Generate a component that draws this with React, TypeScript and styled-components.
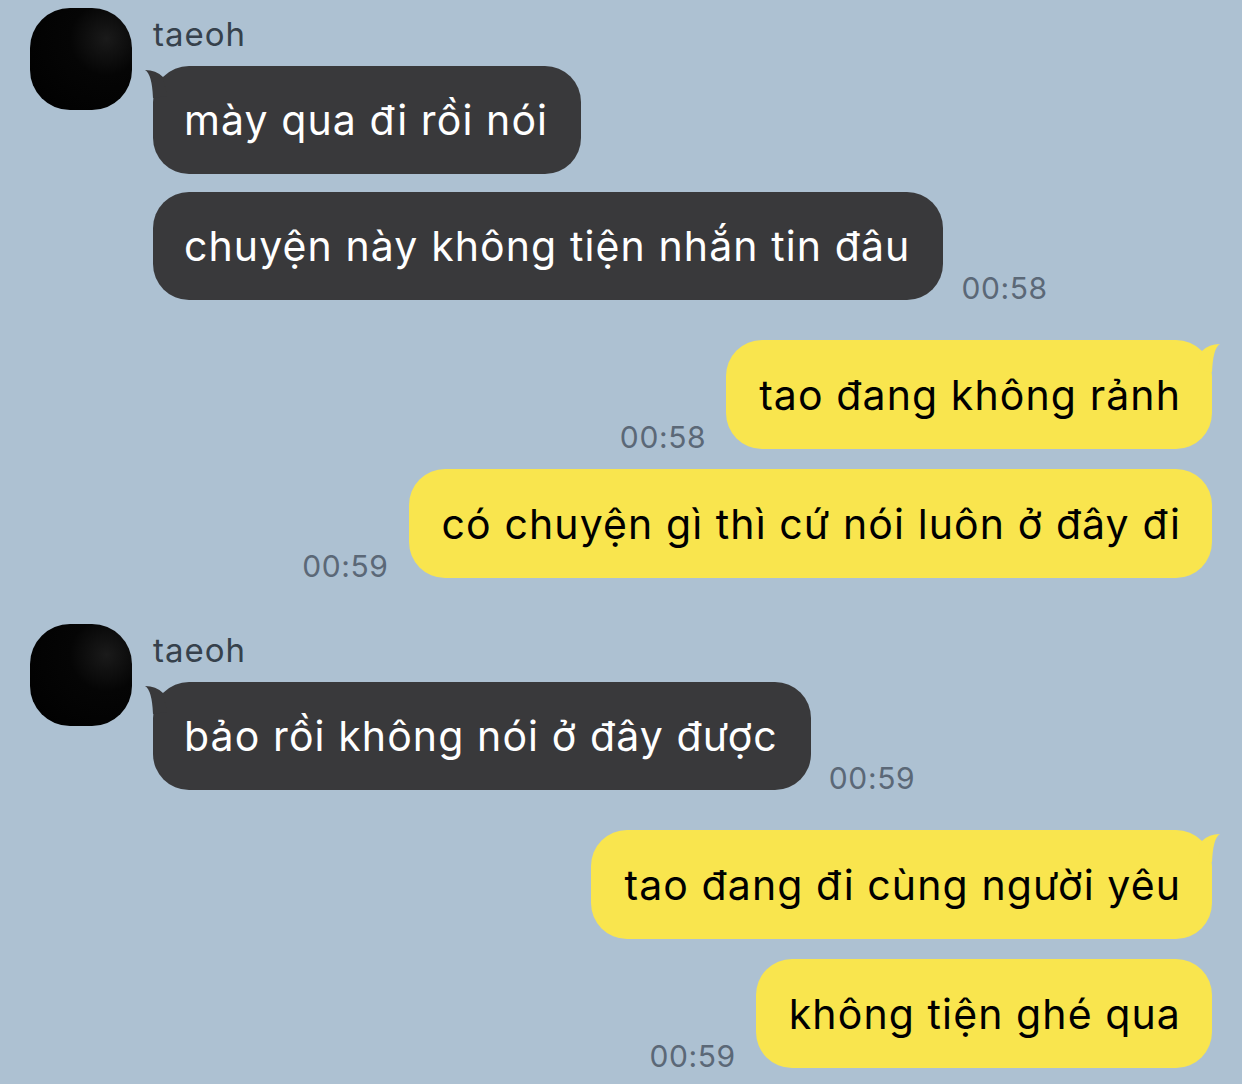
import React from "react";
import styled, { createGlobalStyle } from "styled-components";

const GlobalStyle = createGlobalStyle`
  html, body {
    margin: 0;
    padding: 0;
    background: #adc1d2;
  }
  body {
    font-family: Inter, "Noto Sans", "Liberation Sans", sans-serif;
  }
`;

type Msg = { text: string; time?: string };

const incomingA: Msg[] = [
  { text: "mày qua đi rồi nói" },
  { text: "chuyện này không tiện nhắn tin đâu", time: "00:58" },
];
const outgoingA: Msg[] = [
  { text: "tao đang không rảnh", time: "00:58" },
  { text: "có chuyện gì thì cứ nói luôn ở đây đi", time: "00:59" },
];
const incomingB: Msg[] = [{ text: "bảo rồi không nói ở đây được", time: "00:59" }];
const outgoingB: Msg[] = [
  { text: "tao đang đi cùng người yêu" },
  { text: "không tiện ghé qua", time: "00:59" },
];

const Page = styled.div`
  width: 1242px;
  height: 1084px;
  box-sizing: border-box;
  padding: 8px 30px 0 30px;
  overflow: hidden;
  display: flex;
  flex-direction: column;
`;

const Incoming = styled.div<{ $after: number }>`
  display: flex;
  gap: 21px;
  margin-bottom: ${(p) => p.$after}px;
`;

const Avatar = styled.div`
  flex: none;
  width: 102px;
  height: 102px;
  border-radius: 40px;
  background: radial-gradient(circle at 75% 30%, #1a1a1a 0%, #050505 35%, #000 100%);
`;

const Column = styled.div`
  display: flex;
  flex-direction: column;
  gap: 18px;
`;

const Name = styled.div`
  font-size: 33px;
  line-height: 36px;
  letter-spacing: 1px;
  color: #36414c;
  margin-top: 8px;
  margin-bottom: -4px;
`;

const Row = styled.div<{ $out?: boolean }>`
  display: flex;
  align-items: flex-end;
  justify-content: ${(p) => (p.$out ? "flex-end" : "flex-start")};
  gap: ${(p) => (p.$out ? 20 : 18)}px;
`;

const Outgoing = styled.div<{ $after: number }>`
  display: flex;
  flex-direction: column;
  gap: 20px;
  margin-bottom: ${(p) => p.$after}px;
`;

const Bubble = styled.div<{ $out?: boolean }>`
  position: relative;
  padding: ${(p) => (p.$out ? "32px 31px 31px 33px" : "31px 33px 31px 31px")};
  border-radius: 36px;
  font-size: 41px;
  line-height: 46px;
  letter-spacing: 1.1px;
  white-space: nowrap;
  background: ${(p) => (p.$out ? "#f9e54e" : "#39393b")};
  color: ${(p) => (p.$out ? "#000" : "#fff")};
`;

const Time = styled.div`
  font-size: 30px;
  line-height: 32px;
  letter-spacing: 0.6px;
  color: #5b6877;
  margin-bottom: -4px;
  white-space: nowrap;
`;

const Tail = styled.svg<{ $out?: boolean }>`
  position: absolute;
  top: 0;
  width: 30px;
  height: 36px;
  overflow: visible;
  ${(p) => (p.$out ? "right: 0;" : "left: 0;")}
`;

const TailIn = () => (
  <Tail viewBox="0 0 30 36">
    <path d="M -8 4 Q 3 4 10 11 L 14 30 L 0 32 Q -1 8 -8 4 Z" fill="#39393b" />
  </Tail>
);

const TailOut = () => (
  <Tail $out viewBox="0 0 30 36">
    <path d="M 38 4 Q 27 4 20 11 L 16 30 L 30 32 Q 31 8 38 4 Z" fill="#f9e54e" />
  </Tail>
);

const InGroup = ({ msgs, after }: { msgs: Msg[]; after: number }) => (
  <Incoming $after={after}>
    <Avatar />
    <Column>
      <Name>taeoh</Name>
      {msgs.map((m, i) => (
        <Row key={i}>
          <Bubble>
            {i === 0 && <TailIn />}
            {m.text}
          </Bubble>
          {m.time && <Time>{m.time}</Time>}
        </Row>
      ))}
    </Column>
  </Incoming>
);

const OutGroup = ({ msgs, after }: { msgs: Msg[]; after: number }) => (
  <Outgoing $after={after}>
    {msgs.map((m, i) => (
      <Row $out key={i}>
        {m.time && <Time>{m.time}</Time>}
        <Bubble $out>
          {i === 0 && <TailOut />}
          {m.text}
        </Bubble>
      </Row>
    ))}
  </Outgoing>
);

export default function App() {
  return (
    <>
      <GlobalStyle />
      <Page>
        <InGroup msgs={incomingA} after={40} />
        <OutGroup msgs={outgoingA} after={46} />
        <InGroup msgs={incomingB} after={40} />
        <OutGroup msgs={outgoingB} after={0} />
      </Page>
    </>
  );
}
